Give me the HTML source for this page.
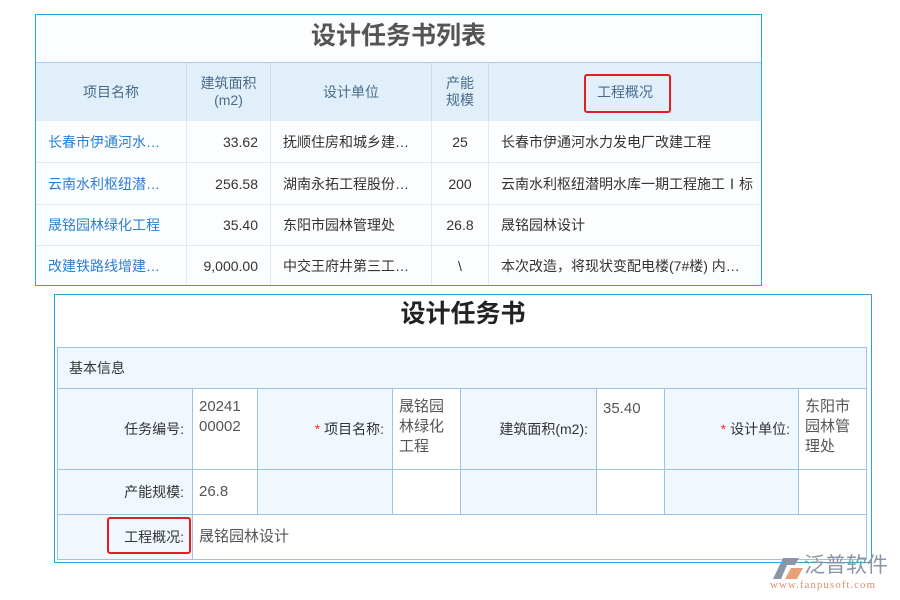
<!DOCTYPE html><html><head><meta charset="utf-8"><style>
*{box-sizing:border-box}
body{margin:0;width:900px;height:600px;background:#fff;position:relative;overflow:hidden;font-family:"Liberation Sans","Noto Sans CJK SC",sans-serif;font-size:14px;color:#333}
.a{position:absolute}
.c{display:flex;align-items:center}
.h{background:#e1effb;color:#4a6b8a;justify-content:center;text-align:center;line-height:17px;border-right:1px solid #c9dff0}
.r{border-bottom:1px solid #e3e8ee;border-right:1px solid #e3e8ee;padding:0 12px;white-space:nowrap;overflow:hidden;flex:none}
.lk{color:#2c7fd6}
.b{border:1px solid #9cc3e6}
.lb{background:#f0f7fe;justify-content:flex-end;padding-right:8px;color:#333}
.v{background:#fff;padding:8px 6px;color:#555;line-height:20px;align-items:flex-start;font-size:15px}
.s{color:#e33;margin-right:4px}
</style></head><body>
<div class="a" style="left:35px;top:14px;width:727px;height:272px;border:1px solid #2aa4e0;background:#fcfdfe"></div>
<div class="a" style="left:36px;top:19px;width:725px;text-align:center;font-size:25px;font-weight:bold;color:#555;line-height:34px">设计任务书列表</div>
<div class="a" style="left:36px;top:62px;width:725px;height:1px;background:#a8d0ee"></div>
<div class="a c h" style="left:36px;top:63px;width:151px;height:58px">项目名称</div>
<div class="a c h" style="left:187px;top:63px;width:84px;height:58px">建筑面积<br>(m2)</div>
<div class="a c h" style="left:271px;top:63px;width:161px;height:58px">设计单位</div>
<div class="a c h" style="left:432px;top:63px;width:57px;height:58px">产能<br>规模</div>
<div class="a c h" style="left:489px;top:63px;width:272px;height:58px;border-right:0">工程概况</div>
<div class="a" style="left:584px;top:74px;width:87px;height:39px;border:2px solid #e02020;border-radius:3px"></div>

<div class="a" style="left:36px;top:121px;width:725px">
<div style="display:flex;height:42px"><div class="c r lk" style="width:151px">长春市伊通河水…</div><div class="c r" style="width:84px;justify-content:flex-end">33.62</div><div class="c r" style="width:161px">抚顺住房和城乡建…</div><div class="c r" style="width:57px;justify-content:center">25</div><div class="c r" style="width:272px;border-right:0">长春市伊通河水力发电厂改建工程</div></div>
<div style="display:flex;height:42px"><div class="c r lk" style="width:151px">云南水利枢纽潜…</div><div class="c r" style="width:84px;justify-content:flex-end">256.58</div><div class="c r" style="width:161px">湖南永拓工程股份…</div><div class="c r" style="width:57px;justify-content:center">200</div><div class="c r" style="width:272px;border-right:0">云南水利枢纽潜明水库一期工程施工Ⅰ标</div></div>
<div style="display:flex;height:41px"><div class="c r lk" style="width:151px">晟铭园林绿化工程</div><div class="c r" style="width:84px;justify-content:flex-end">35.40</div><div class="c r" style="width:161px">东阳市园林管理处</div><div class="c r" style="width:57px;justify-content:center">26.8</div><div class="c r" style="width:272px;border-right:0">晟铭园林设计</div></div>
<div style="display:flex;height:39px"><div class="c r lk" style="width:151px;border-bottom:0">改建铁路线增建…</div><div class="c r" style="width:84px;justify-content:flex-end;border-bottom:0">9,000.00</div><div class="c r" style="width:161px;border-bottom:0">中交王府井第三工…</div><div class="c r" style="width:57px;justify-content:center;border-bottom:0">\</div><div class="c r" style="width:272px;border:0">本次改造，将现状变配电楼(7#楼) 内…</div></div>
</div>

<div class="a" style="left:54px;top:294px;width:818px;height:269px;border:1px solid #2aa4e0;background:#fff"></div>
<div class="a" style="left:55px;top:297px;width:816px;text-align:center;font-size:25px;font-weight:bold;color:#222;line-height:34px">设计任务书</div>
<div class="a c b" style="left:57px;top:347px;width:810px;height:42px;background:#f0f7fe;padding-left:11px">基本信息</div>
<div class="a c b lb" style="left:57px;top:388px;width:136px;height:82px">任务编号:</div>
<div class="a c b v" style="left:192px;top:388px;width:66px;height:82px">20241<br>00002</div>
<div class="a c b lb" style="left:257px;top:388px;width:136px;height:82px"><span class="s">*</span>项目名称:</div>
<div class="a c b v" style="left:392px;top:388px;width:69px;height:82px">晟铭园<br>林绿化<br>工程</div>
<div class="a c b lb" style="left:460px;top:388px;width:137px;height:82px">建筑面积(m2):</div>
<div class="a c b v" style="left:596px;top:388px;width:69px;height:82px;padding-top:10px">35.40</div>
<div class="a c b lb" style="left:664px;top:388px;width:135px;height:82px"><span class="s">*</span>设计单位:</div>
<div class="a c b v" style="left:798px;top:388px;width:69px;height:82px">东阳市<br>园林管<br>理处</div>
<div class="a c b lb" style="left:57px;top:469px;width:136px;height:46px">产能规模:</div>
<div class="a c b v" style="left:192px;top:469px;width:66px;height:46px;align-items:center">26.8</div>
<div class="a b lb" style="left:257px;top:469px;width:136px;height:46px"></div>
<div class="a b" style="left:392px;top:469px;width:69px;height:46px"></div>
<div class="a b lb" style="left:460px;top:469px;width:137px;height:46px"></div>
<div class="a b" style="left:596px;top:469px;width:69px;height:46px"></div>
<div class="a b lb" style="left:664px;top:469px;width:135px;height:46px"></div>
<div class="a b" style="left:798px;top:469px;width:69px;height:46px"></div>
<div class="a c b lb" style="left:57px;top:514px;width:136px;height:46px">工程概况:</div>
<div class="a c b v" style="left:192px;top:514px;width:675px;height:46px;align-items:center">晟铭园林设计</div>
<div class="a" style="left:107px;top:517px;width:84px;height:37px;border:2px solid #e02020;border-radius:3px"></div>

<svg class="a" style="left:769px;top:555px" width="36" height="26" viewBox="0 0 36 26"><path d="M4 24 L14 3 L30 3 L26 10 L18 10 L12 24Z" fill="#8a96a8"/><path d="M16 24 L22 13 L34 13 L28 24Z" fill="#e8a07a"/></svg>
<div class="a" style="left:804px;top:553px;font-size:21px;color:#8a96a8;line-height:26px;white-space:nowrap;letter-spacing:0px">泛普软件</div>
<div class="a" style="left:770px;top:579px;font-size:11px;color:#e09070;font-family:'Liberation Serif',serif;letter-spacing:1px;white-space:nowrap">www.fanpusoft.com</div>
</body></html>
